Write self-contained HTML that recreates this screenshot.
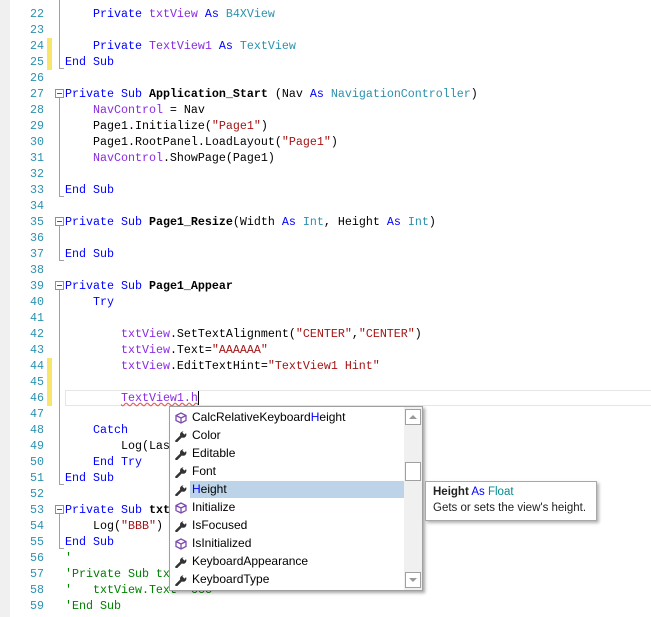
<!DOCTYPE html>
<html><head><meta charset="utf-8"><style>
body{margin:0;width:651px;height:617px;background:#fff;position:relative;overflow:hidden;font-family:"Liberation Mono",monospace;font-size:11.67px}
.gut{position:absolute;left:0;top:0;width:10px;height:617px;background:#f0f0f0}
.ln{position:absolute;left:10px;width:34px;text-align:right;color:#2b91af;height:16px;line-height:16px}
.c{position:absolute;left:65px;white-space:pre;height:16px;line-height:16px;color:#000}
.k{color:#0000ff}.t{color:#2b91af}.p{color:#8a2be2}.s{color:#a31515}.g{color:#008000}.b{font-weight:bold}
.y{position:absolute;left:47px;width:5px;height:16px;background:#f8e56a}
.fold{position:absolute;left:59px;width:1px;background:#a0a0a0}
.fb{position:absolute;left:55px;width:7px;height:7px;border:1px solid #909090;background:#fff;box-sizing:content-box}
.fb:after{content:"";position:absolute;left:1px;top:3px;width:5px;height:1px;background:#555}
.ft{position:absolute;left:59px;width:5px;height:1px;background:#a0a0a0}
.pop{position:absolute;left:169px;top:406px;width:252px;height:183px;border:1px solid #a0a0a0;background:#fff;box-shadow:2px 2px 3px rgba(0,0,0,.35);font-family:"Liberation Sans",sans-serif;font-size:12px}
.it{position:absolute;left:0;width:234px;height:18px;line-height:17px}
.it span{position:absolute;left:22px}
.sel{background:#bcd3e8}
.ic{position:absolute;left:5px;top:3px;width:12px;height:12px}
.sb{position:absolute;left:234px;top:0;width:18px;height:183px;background:#f0f0f0}
.tip{position:absolute;left:425px;top:481px;width:170px;height:38px;border:1px solid #a8a8a8;background:#fff;box-shadow:2px 2px 3px rgba(0,0,0,.3);font-family:"Liberation Sans",sans-serif;font-size:11.5px;color:#222}
</style></head><body>
<div class="gut"></div>
<div style="position:absolute;left:65px;top:390px;width:586px;height:14px;border:1px solid #e6e6e6"></div>

<div class="ln" style="top:6px">22</div><div class="c" style="top:6px">    <span class="k">Private</span> <span class="p">txtView</span> <span class="k">As</span> <span class="t">B4XView</span></div>
<div class="ln" style="top:22px">23</div>
<div class="ln" style="top:38px">24</div><div class="y" style="top:38px"></div><div class="c" style="top:38px">    <span class="k">Private</span> <span class="p">TextView1</span> <span class="k">As</span> <span class="t">TextView</span></div>
<div class="ln" style="top:54px">25</div><div class="y" style="top:54px"></div><div class="c" style="top:54px"><span class="k">End Sub</span></div>
<div class="ln" style="top:70px">26</div>
<div class="ln" style="top:86px">27</div><div class="c" style="top:86px"><span class="k">Private Sub</span> <span class="b">Application_Start</span> (Nav <span class="k">As</span> <span class="t">NavigationController</span>)</div>
<div class="ln" style="top:102px">28</div><div class="c" style="top:102px">    <span class="p">NavControl</span> = Nav</div>
<div class="ln" style="top:118px">29</div><div class="c" style="top:118px">    Page1.Initialize(<span class="s">"Page1"</span>)</div>
<div class="ln" style="top:134px">30</div><div class="c" style="top:134px">    Page1.RootPanel.LoadLayout(<span class="s">"Page1"</span>)</div>
<div class="ln" style="top:150px">31</div><div class="c" style="top:150px">    <span class="p">NavControl</span>.ShowPage(Page1)</div>
<div class="ln" style="top:166px">32</div>
<div class="ln" style="top:182px">33</div><div class="c" style="top:182px"><span class="k">End Sub</span></div>
<div class="ln" style="top:198px">34</div>
<div class="ln" style="top:214px">35</div><div class="c" style="top:214px"><span class="k">Private Sub</span> <span class="b">Page1_Resize</span>(Width <span class="k">As</span> <span class="t">Int</span>, Height <span class="k">As</span> <span class="t">Int</span>)</div>
<div class="ln" style="top:230px">36</div>
<div class="ln" style="top:246px">37</div><div class="c" style="top:246px"><span class="k">End Sub</span></div>
<div class="ln" style="top:262px">38</div>
<div class="ln" style="top:278px">39</div><div class="c" style="top:278px"><span class="k">Private Sub</span> <span class="b">Page1_Appear</span></div>
<div class="ln" style="top:294px">40</div><div class="c" style="top:294px">    <span class="k">Try</span></div>
<div class="ln" style="top:310px">41</div>
<div class="ln" style="top:326px">42</div><div class="c" style="top:326px">        <span class="p">txtView</span>.SetTextAlignment(<span class="s">"CENTER"</span>,<span class="s">"CENTER"</span>)</div>
<div class="ln" style="top:342px">43</div><div class="c" style="top:342px">        <span class="p">txtView</span>.Text=<span class="s">"AAAAAA"</span></div>
<div class="ln" style="top:358px">44</div><div class="y" style="top:358px"></div><div class="c" style="top:358px">        <span class="p">txtView</span>.EditTextHint=<span class="s">"TextView1 Hint"</span></div>
<div class="ln" style="top:374px">45</div><div class="y" style="top:374px"></div>
<div class="ln" style="top:390px">46</div><div class="y" style="top:390px"></div><div class="c" style="top:390px">        <span class="p" style="text-decoration:underline wavy #e06060">TextView1.h</span><span style="border-left:1px solid #000"></span></div>
<div class="ln" style="top:406px">47</div>
<div class="ln" style="top:422px">48</div><div class="c" style="top:422px">    <span class="k">Catch</span></div>
<div class="ln" style="top:438px">49</div><div class="c" style="top:438px">        Log(LastException)</div>
<div class="ln" style="top:454px">50</div><div class="c" style="top:454px">    <span class="k">End Try</span></div>
<div class="ln" style="top:470px">51</div><div class="c" style="top:470px"><span class="k">End Sub</span></div>
<div class="ln" style="top:486px">52</div>
<div class="ln" style="top:502px">53</div><div class="c" style="top:502px"><span class="k">Private Sub</span> <span class="b">txtView_TextChanged</span></div>
<div class="ln" style="top:518px">54</div><div class="c" style="top:518px">    Log(<span class="s">"BBB"</span>)</div>
<div class="ln" style="top:534px">55</div><div class="c" style="top:534px"><span class="k">End Sub</span></div>
<div class="ln" style="top:550px">56</div><div class="c g" style="top:550px">'</div>
<div class="ln" style="top:566px">57</div><div class="c g" style="top:566px">'Private Sub txtView_EnterPressed</div>
<div class="ln" style="top:582px">58</div><div class="c g" style="top:582px">'   txtView.Text="CCC"</div>
<div class="ln" style="top:598px">59</div><div class="c g" style="top:598px">'End Sub</div>

<div class="fold" style="top:0;height:69px"></div><div class="ft" style="top:68px"></div>
<div class="fb" style="top:89px"></div><div class="fold" style="top:98px;height:99px"></div><div class="ft" style="top:196px"></div>
<div class="fb" style="top:217px"></div><div class="fold" style="top:226px;height:35px"></div><div class="ft" style="top:260px"></div>
<div class="fb" style="top:281px"></div><div class="fold" style="top:290px;height:195px"></div><div class="ft" style="top:484px"></div>
<div class="fb" style="top:505px"></div><div class="fold" style="top:514px;height:35px"></div><div class="ft" style="top:548px"></div>

<svg width="0" height="0" style="position:absolute"><defs>
<g id="cube"><path d="M6 1 L11 3.5 L11 8.5 L6 11 L1 8.5 L1 3.5 Z M1 3.5 L6 6 L11 3.5 M6 6 L6 11" fill="none" stroke="#7e4cb0" stroke-width="1.3"/></g>
<g id="wr"><path d="M1.5 11 L6 6.5" stroke="#333" stroke-width="2.6" stroke-linecap="round"/><circle cx="8.2" cy="4.6" r="3.2" fill="#333"/><rect x="8" y="1" width="3" height="3" fill="#fff" transform="rotate(45 9.5 2.5)"/></g>
</defs></svg>
<div class="pop">
<div class="it" style="top:2px"><svg class="ic"><use href="#cube"/></svg><span>CalcRelativeKeyboard<b style="font-weight:normal;color:#0000ff">H</b>eight</span></div>
<div class="it" style="top:20px"><svg class="ic"><use href="#wr"/></svg><span>Color</span></div>
<div class="it" style="top:38px"><svg class="ic"><use href="#wr"/></svg><span>Editable</span></div>
<div class="it" style="top:56px"><svg class="ic"><use href="#wr"/></svg><span>Font</span></div>
<div class="it" style="top:74px"><svg class="ic"><use href="#wr"/></svg><span style="left:0;width:214px;margin-left:20px;padding-left:2px" class="sel"><b style="font-weight:normal;color:#0000ff">H</b>eight</span></div>
<div class="it" style="top:92px"><svg class="ic"><use href="#cube"/></svg><span>Initialize</span></div>
<div class="it" style="top:110px"><svg class="ic"><use href="#wr"/></svg><span>IsFocused</span></div>
<div class="it" style="top:128px"><svg class="ic"><use href="#cube"/></svg><span>IsInitialized</span></div>
<div class="it" style="top:146px"><svg class="ic"><use href="#wr"/></svg><span>KeyboardAppearance</span></div>
<div class="it" style="top:164px"><svg class="ic"><use href="#wr"/></svg><span>KeyboardType</span></div>
<div class="sb">
<div style="position:absolute;left:1px;top:2px;width:14px;height:14px;border:1px solid #a0a0a0;background:#fff"><div style="position:absolute;left:3px;top:5px;border:4px solid transparent;border-bottom:4px solid #999;border-top:0"></div></div>
<div style="position:absolute;left:1px;top:55px;width:14px;height:17px;border:1px solid #a0a0a0;background:#fff"></div>
<div style="position:absolute;left:1px;top:165px;width:14px;height:14px;border:1px solid #a0a0a0;background:#fff"><div style="position:absolute;left:3px;top:5px;border:4px solid transparent;border-top:4px solid #999;border-bottom:0"></div></div>
</div>
</div>
<div class="tip">
<div style="position:absolute;left:7px;top:4px"><b>Height</b> <span style="color:#0000ff">As</span> <span style="color:#008b8b">Float</span></div>
<div style="position:absolute;left:7px;top:20px">Gets or sets the view's height.</div>
</div>
</body></html>
